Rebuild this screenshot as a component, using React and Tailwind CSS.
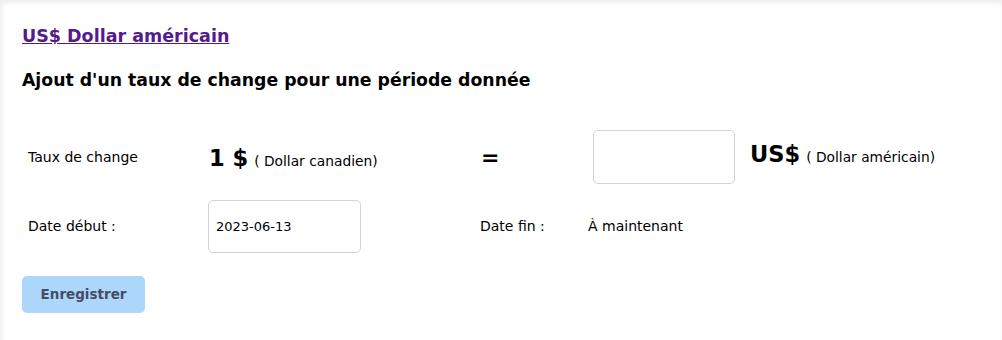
import React from 'react';

export default function App() {
	return (
		<div
			className="w-[1002px] h-[340px] bg-white text-black shadow-[inset_2px_3px_5px_rgba(0,0,0,0.07)] overflow-hidden"
			style={{ fontFamily: '"DejaVu Sans", Verdana, sans-serif' }}
		>
			<div className="px-[22px] pt-[25px]">
				{/* Currency link */}
				<a href="#" className="text-[17.5px] leading-[20px] font-bold text-[#551a8b] underline">
					US$ Dollar américain
				</a>

				<h2 className="mt-[21px] text-[17.3px] leading-[20px] font-bold">
					Ajout d'un taux de change pour une période donnée
				</h2>

				{/* Rate row */}
				<div className="mt-[40px] flex items-center h-[54px]">
					<div className="w-[186px] pl-[6px] text-[14px]">Taux de change</div>
					<div className="w-[272px] pl-[1px] pt-[3px]">
						<span className="text-[22.5px] font-bold">1 $</span>
						<span className="text-[13.8px] ml-[6px]">( Dollar canadien)</span>
					</div>
					<div className="w-[113px] pl-[1px] text-[22px] font-bold">=</div>
					<input
						type="text"
						className="w-[142px] h-[54px] border border-[#d3d3d3] rounded-[5px] px-[8px] text-[13px] outline-none"
					/>
					<div className="ml-[15px] -mt-[5px]">
						<span className="text-[22.5px] font-bold">US$</span>
						<span className="text-[13.8px] ml-[6px]">( Dollar américain)</span>
					</div>
				</div>

				{/* Date row */}
				<div className="mt-[16px] flex items-center h-[53px] text-[14px]">
					<div className="w-[186px] pl-[6px]">Date début :</div>
					<div className="w-[272px]">
						<input
							type="text"
							defaultValue="2023-06-13"
							className="w-[153px] h-[53px] border border-[#d3d3d3] rounded-[5px] px-[7px] text-[13px] outline-none"
						/>
					</div>
					<div className="w-[108px]">Date fin :</div>
					<div>À maintenant</div>
				</div>

				<button
					type="button"
					className="mt-[23px] w-[123px] h-[37px] rounded-[5px] bg-[#add6fb] text-[13.5px] font-bold text-[#454c63]"
				>
					Enregistrer
				</button>
			</div>
		</div>
	);
}
